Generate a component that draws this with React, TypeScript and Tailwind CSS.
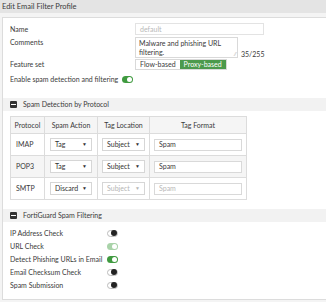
const Toggle = ({ on, faded }: { on: boolean; faded?: boolean }) => {
  if (on) {
    return (
      <span
        className={`inline-flex h-[7px] w-[11px] shrink-0 items-center justify-end rounded-full px-[1px] ${
          faded ? "bg-[#a9d3a9]" : "bg-[#3f9a3f]"
        }`}
      >
        <span className="h-[5px] w-[5px] rounded-full bg-white" />
      </span>
    );
  }
  return (
    <span className="inline-flex h-[7px] w-[11px] shrink-0 items-center justify-end rounded-full border border-[#bbb] bg-white">
      <span className="h-[6px] w-[6px] rounded-full bg-[#222]" />
    </span>
  );
};

const Select = ({ value, w, disabled }: { value: string; w: string; disabled?: boolean }) => (
  <div
    className={`flex h-[13px] items-center justify-between border border-[#d6d6d6] bg-white pl-[4px] pr-[4px] ${w} ${
      disabled ? "text-[#b5b5b5]" : "text-[#333]"
    }`}
  >
    <span>{value}</span>
    <span className="text-[5px]">▼</span>
  </div>
);

const SectionHead = ({ title }: { title: string }) => (
  <div className="flex h-[13px] items-center gap-[6px] bg-[#f2f2f2] pl-[7px]">
    <span className="flex h-[7px] w-[7px] items-center justify-center rounded-[1px] bg-[#333]">
      <span className="h-[1px] w-[5px] bg-white" />
    </span>
    <span>{title}</span>
  </div>
);

const rows = [
  { p: "IMAP", a: "Tag", shaded: false, off: false },
  { p: "POP3", a: "Tag", shaded: true, off: false },
  { p: "SMTP", a: "Discard", shaded: false, off: true },
];

const checks = [
  { label: "IP Address Check", on: false },
  { label: "URL Check", on: true, faded: true },
  { label: "Detect Phishing URLs in Email", on: true },
  { label: "Email Checksum Check", on: false },
  { label: "Spam Submission", on: false },
];

export default function App() {
  return (
    <div className="h-[302px] w-[326px] overflow-hidden whitespace-nowrap bg-[#f4f4f4] font-['Lato',sans-serif] text-[7px] leading-none text-[#3a3a3a]">
      <div className="flex h-[13px] items-center bg-[#e4e4e4] pl-[2px] text-[7.5px]">
        Edit Email Filter Profile
      </div>
      <div className="ml-[2px] mt-[4px] h-[283px] border-l border-t border-b border-[#dcdcdc] bg-white">
        <div className="flex flex-col pl-[7px] pt-[5px]">
          <div className="flex h-[12px] items-center">
            <span className="w-[125px] shrink-0">Name</span>
            <div className="flex h-[12px] w-[129px] items-center border border-[#e3e3e3] pl-[4px] text-[#b8b8b8]">
              default
            </div>
          </div>
          <div className="mt-[2px] flex items-start">
            <span className="mt-[2px] w-[125px] shrink-0">Comments</span>
            <div className="relative h-[21px] w-[103px] whitespace-normal border border-[#d9d9d9] px-[3px] pt-[1px] leading-[9px]">
              Malware and phishing URL filtering.
              <span className="absolute bottom-[0px] right-[1px] text-[5px] leading-none text-[#aaa]">⁄⁄</span>
            </div>
            <span className="mt-[14px] ml-[3px]">35/255</span>
          </div>
          <div className="mt-[1px] flex h-[11px] items-center">
            <span className="w-[125px] shrink-0">Feature set</span>
            <div className="flex h-[11px] border border-[#d9d9d9]">
              <span className="flex items-center px-[4px]">Flow-based</span>
              <span className="flex items-center bg-[#4c9a4c] px-[4px] text-white">Proxy-based</span>
            </div>
          </div>
          <div className="mt-[4px] flex h-[10px] items-center gap-[4px]">
            <span>Enable spam detection and filtering</span>
            <Toggle on />
          </div>
        </div>

        <div className="mt-[14px]">
          <SectionHead title="Spam Detection by Protocol" />
        </div>
        <div className="ml-[7px] mt-[5px] w-[237px] border border-[#dcdcdc]">
          <div className="flex h-[16px] bg-[#f5f5f5] text-center">
            <div className="flex w-[34px] items-center justify-center border-r border-[#dcdcdc]">Protocol</div>
            <div className="flex w-[53px] items-center justify-center border-r border-[#dcdcdc]">Spam Action</div>
            <div className="flex w-[52px] items-center justify-center border-r border-[#dcdcdc]">Tag Location</div>
            <div className="flex flex-1 items-center justify-center">Tag Format</div>
          </div>
          {rows.map((r) => (
            <div
              key={r.p}
              className={`flex h-[22px] border-t border-[#dcdcdc] ${r.shaded ? "bg-[#f5f5f5]" : "bg-white"}`}
            >
              <div className="flex w-[34px] items-center border-r border-[#dcdcdc] pl-[5px]">{r.p}</div>
              <div className="flex w-[53px] items-center border-r border-[#dcdcdc] pl-[5px]">
                <Select value={r.a} w="w-[42px]" />
              </div>
              <div className="flex w-[52px] items-center border-r border-[#dcdcdc] pl-[4px]">
                <Select value="Subject" w="w-[43px]" disabled={r.off} />
              </div>
              <div className="flex flex-1 items-center pl-[4px]">
                <div
                  className={`flex h-[12px] w-[88px] items-center border border-[#d9d9d9] bg-white pl-[4px] ${
                    r.off ? "text-[#b8b8b8]" : ""
                  }`}
                >
                  Spam
                </div>
              </div>
            </div>
          ))}
        </div>

        <div className="mt-[9px]">
          <SectionHead title="FortiGuard Spam Filtering" />
        </div>
        <div className="flex flex-col gap-[3px] pl-[7px] pt-[6px]">
          {checks.map((c) => (
            <div key={c.label} className="flex h-[10px] items-center">
              <span className="w-[97px] shrink-0">{c.label}</span>
              <Toggle on={c.on} faded={c.faded} />
            </div>
          ))}
        </div>
      </div>
    </div>
  );
}
